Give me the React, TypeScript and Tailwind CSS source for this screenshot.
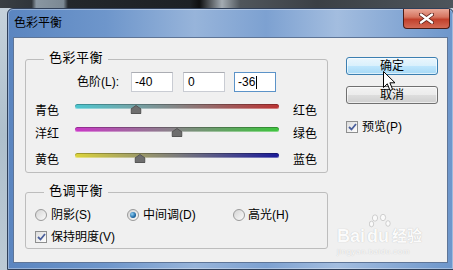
import React from 'react';

const sliders = [
  { left: '青色', right: '红色', value: -40, mt: 'mt-[12px]', track: 'bg-[linear-gradient(90deg,#4cc6cf_0%,#6fa9ad_25%,#858585_50%,#a05a5a_75%,#bb3434_100%)]' },
  { left: '洋红', right: '绿色', value: 0, mt: 'mt-[11px]', track: 'bg-[linear-gradient(90deg,#c938c6_0%,#a660a4_25%,#868686_50%,#5fa65f_75%,#3ec43e_100%)]' },
  { left: '黄色', right: '蓝色', value: -36, mt: 'mt-[14px]', track: 'bg-[linear-gradient(90deg,#dcd43a_0%,#aaa660_25%,#7c7c7c_50%,#4a4a8c_75%,#1a1a98_100%)]' },
];

function Thumb({ value }: { value: number }) {
  return (
    <svg
      className="absolute top-[1px] -translate-x-1/2"
      style={{ left: `${((value + 100) / 200) * 100}%` }}
      width="11"
      height="9"
      viewBox="0 0 11 9"
    >
      <polygon points="5.5,0.5 10.5,4 10.5,8.5 0.5,8.5 0.5,4" fill="#6e6e6e" stroke="#565656" strokeWidth="1" />
    </svg>
  );
}

function CheckBox() {
  return (
    <div className="w-[12px] h-[12px] border border-[#8e8f8f] bg-[linear-gradient(135deg,#dcdcdc,#ffffff)] flex items-center justify-center">
      <svg width="9" height="8" viewBox="0 0 9 8">
        <path d="M1 4 L3.5 6.5 L8 1" fill="none" stroke="#4a5f9c" strokeWidth="1.8" />
      </svg>
    </div>
  );
}

function Radio({ checked }: { checked?: boolean }) {
  return (
    <div className="w-[12px] h-[12px] rounded-full border border-[#9a9a9a] bg-[linear-gradient(135deg,#d4d4d4,#fbfbfb)] flex items-center justify-center">
      {checked && (
        <div className="w-[6px] h-[6px] rounded-full bg-[radial-gradient(circle_at_35%_35%,#8fd0f5,#1f6aa6_60%,#103f6a)]" />
      )}
    </div>
  );
}

function Legend({ children }: { children: React.ReactNode }) {
  return (
    <span className="absolute left-[18px] top-[-10px] px-[5px] bg-[#f0f0f0] text-[13px] leading-[16px] tracking-[0.5px]">
      {children}
    </span>
  );
}

export default function App() {
  return (
    <div className="relative w-[453px] h-[270px] overflow-hidden flex flex-col bg-[linear-gradient(180deg,#c7d3dc,#aebfcc_50%,#bccad5)] text-[12px] text-black [font-family:'Liberation_Sans','Noto_Sans_CJK_SC',sans-serif]">
      {/* desktop behind the dialog */}
      <div className="h-[8px] shrink-0 bg-[linear-gradient(90deg,#3a3f43_0%,#30353a_7%,#8a97a2_8%,#7b8893_14%,#23272b_15%,#1d2125_42%,#0e0f10_44%,#a4acb3_49%,#50565c_53%,#3b4045_70%,#4e555c_100%)]" />

      {/* window */}
      <div className="ml-[7px] w-[447px] h-[262px] shrink-0 flex flex-col rounded-t-[6px] border border-[#30405a] shadow-[inset_0_0_0_1px_rgba(255,255,255,0.35)] bg-[linear-gradient(90deg,#5a85c0_0%,#6e96cb_22%,#97b4da_42%,#7da1d1_58%,#a3bddf_74%,#6d96cb_100%)]">
        {/* title bar */}
        <div className="h-[28px] flex items-start pl-[6px]">
          <span className="self-center text-[12px] leading-[14px]">色彩平衡</span>
          <div className="ml-auto mr-[3px] w-[47px] h-[20px] rounded-b-[4px] border border-t-0 border-[#4b1c15] bg-[linear-gradient(180deg,#e9a898_0%,#d67560_42%,#c2412c_55%,#d36a55_100%)] flex items-center justify-center">
            <svg width="15" height="11" viewBox="0 0 15 11">
              <path d="M2 1.5 L13 9.5 M13 1.5 L2 9.5" stroke="#5a1d16" strokeWidth="4" strokeLinecap="round" />
              <path d="M2 1.5 L13 9.5 M13 1.5 L2 9.5" stroke="#ffffff" strokeWidth="2.4" strokeLinecap="round" />
            </svg>
          </div>
        </div>

        {/* client area */}
        <div className="mx-[5px] h-[226px] border border-[#5e7597] bg-[#f0f0f0] flex">
          <div className="ml-[11px] pt-[21px] w-[303px] flex flex-col">
            {/* 色彩平衡 group */}
            <div className="relative h-[114px] border border-[#bdbdbd] rounded-[3px] pt-[12px]">
              <Legend>色彩平衡</Legend>
              <div className="flex items-center h-[20px] pl-[51px]">
                <span className="w-[54px] leading-[14px]">色阶(L):</span>
                <div className="w-[42px] h-[20px] border border-[#c9ccd3] border-t-[#abadb3] bg-white pl-[3px] leading-[18px]">-40</div>
                <div className="ml-[10px] w-[42px] h-[20px] border border-[#c9ccd3] border-t-[#abadb3] bg-white pl-[4px] leading-[18px]">0</div>
                <div className="ml-[9px] w-[42px] h-[20px] border border-[#5c93c8] bg-white pl-[3px] leading-[18px] flex items-center">
                  <span>-36</span>
                  <span className="ml-[1px] w-[1px] h-[13px] bg-black" />
                </div>
              </div>
              {sliders.map((s) => (
                <div key={s.left} className={`flex items-start h-[12px] ${s.mt}`}>
                  <span className="w-[49px] pl-[9px] leading-[14px]">{s.left}</span>
                  <div className="relative w-[204px] h-[12px]">
                    <div className={`h-[5px] rounded-full ${s.track} shadow-[inset_0_1px_0_rgba(0,0,0,0.25),inset_0_-1px_0_rgba(255,255,255,0.35)]`} />
                    <Thumb value={s.value} />
                  </div>
                  <span className="ml-[14px] leading-[14px]">{s.right}</span>
                </div>
              ))}
            </div>

            {/* 色调平衡 group */}
            <div className="relative mt-[19px] h-[57px] border border-[#bdbdbd] rounded-[3px] pt-[14px] pl-[9px]">
              <Legend>色调平衡</Legend>
              <div className="flex items-center h-[16px]">
                <div className="w-[92px] flex items-center gap-[4px]">
                  <Radio />
                  <span className="leading-[14px]">阴影(S)</span>
                </div>
                <div className="w-[106px] flex items-center gap-[4px]">
                  <Radio checked />
                  <span className="leading-[14px]">中间调(D)</span>
                </div>
                <div className="flex items-center gap-[3px]">
                  <Radio />
                  <span className="leading-[14px]">高光(H)</span>
                </div>
              </div>
              <div className="mt-[6px] flex items-center h-[16px] gap-[4px]">
                <CheckBox />
                <span className="leading-[14px]">保持明度(V)</span>
              </div>
            </div>
          </div>

          {/* buttons */}
          <div className="ml-[18px] pt-[19px] flex flex-col">
            <button className="w-[92px] h-[18px] rounded-[3px] border border-[#3c7fb1] bg-[linear-gradient(180deg,#eaf6fd_0%,#d9f0fc_50%,#bee6fd_51%,#a7d9f5_100%)] leading-[14px] shadow-[inset_0_0_0_1px_rgba(255,255,255,0.6)]">
              确定
            </button>
            <button className="mt-[11px] w-[92px] h-[18px] rounded-[3px] border border-[#707070] bg-[linear-gradient(180deg,#f2f2f2_0%,#ebebeb_50%,#dddddd_51%,#cfcfcf_100%)] leading-[14px] shadow-[inset_0_0_0_1px_rgba(255,255,255,0.6)]">
              取消
            </button>
            <div className="mt-[15px] flex items-center h-[16px] gap-[4px]">
              <CheckBox />
              <span className="leading-[14px]">预览(P)</span>
            </div>
          </div>
        </div>
      </div>

      {/* mouse pointer */}
      <svg className="absolute left-[383px] top-[71px]" width="13" height="21" viewBox="0 0 13 21">
        <path d="M0.5 0.5 L0.5 16.5 L4.3 12.8 L7 19.5 L9.6 18.4 L6.9 11.8 L12 11.8 Z" fill="#ffffff" stroke="#000000" strokeWidth="1" />
      </svg>

      {/* Baidu 经验 watermark */}
      <div className="absolute left-[337px] top-[226px] flex flex-col items-start text-[#fbfbfb] [text-shadow:0_0_1px_#b8b8b8]">
        <div className="relative flex items-end">
          <span className="text-[18px] font-bold leading-[20px]">Bai</span>
          <span className="ml-[2px] text-[18px] font-bold leading-[20px]">du</span>
          <span className="ml-[3px] text-[15px] font-bold leading-[20px]">经验</span>
          <svg className="absolute left-[32px] top-[-12px]" width="22" height="18" viewBox="0 0 22 18">
            <g fill="#fafafa" stroke="#c4c4c4" strokeWidth="0.8">
              <ellipse cx="6" cy="4" rx="2.6" ry="3.2" />
              <ellipse cx="14" cy="3.5" rx="2.6" ry="3.2" />
              <ellipse cx="2.5" cy="10" rx="2.2" ry="2.8" />
              <ellipse cx="19" cy="9.5" rx="2.2" ry="2.8" />
            </g>
          </svg>
        </div>
        <span className="mt-[1px] text-[8px] leading-[9px] tracking-[0.5px]">jingyan.baidu.com</span>
      </div>
    </div>
  );
}
